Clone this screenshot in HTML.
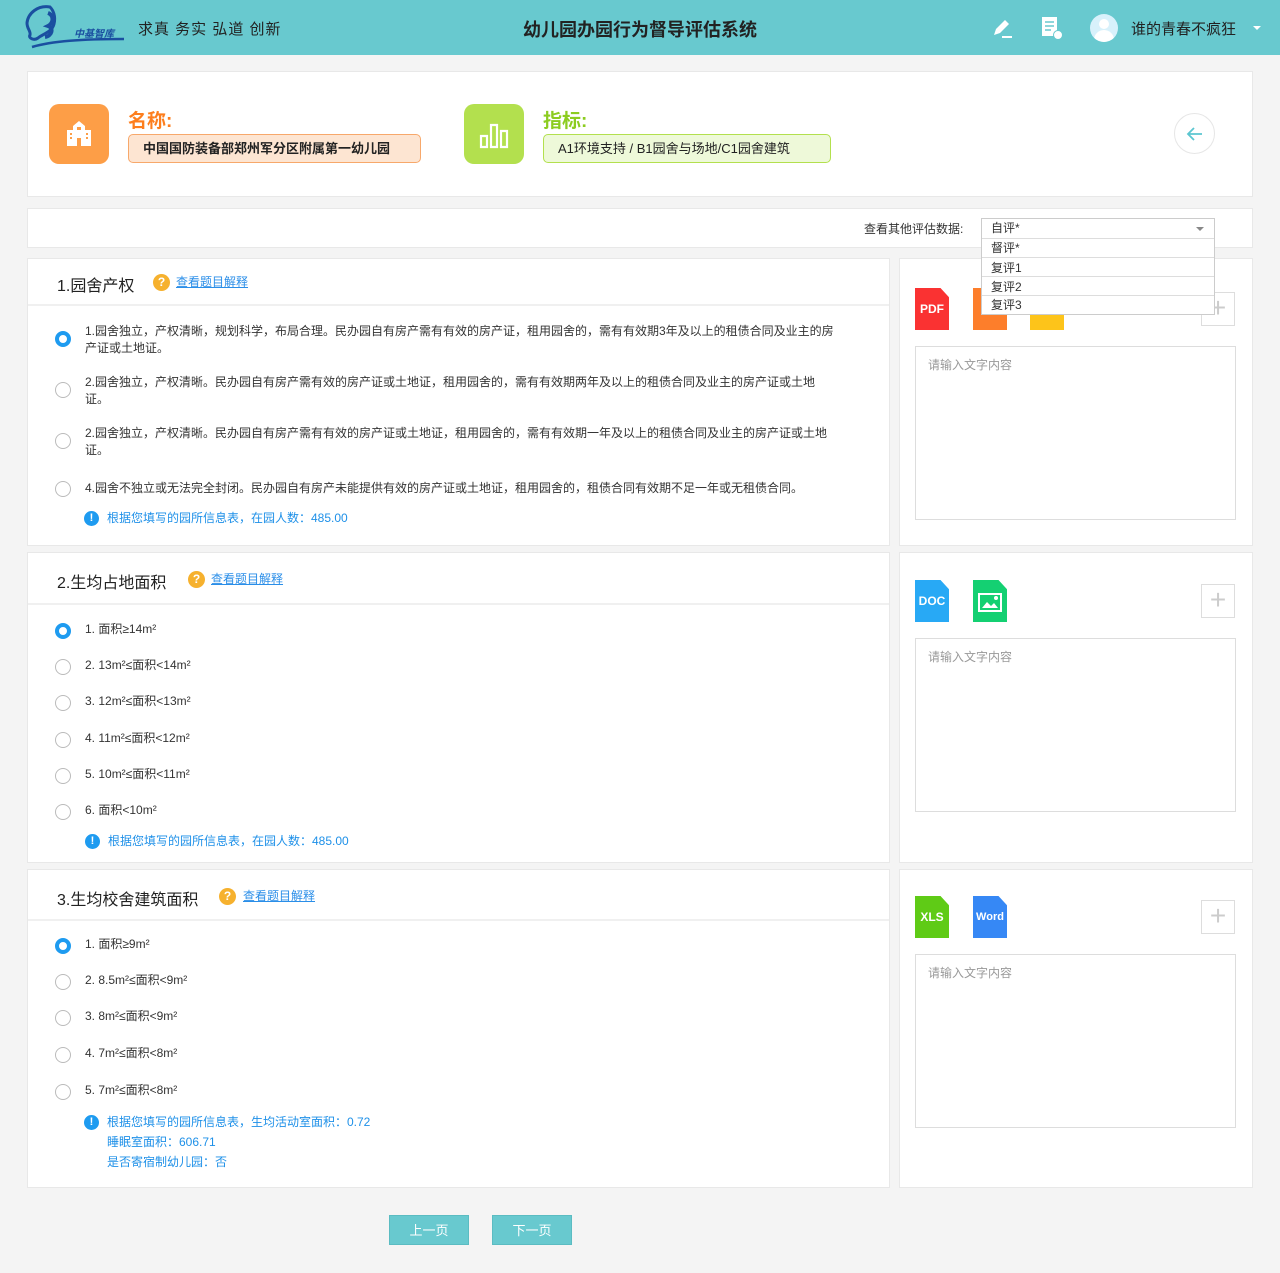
<!DOCTYPE html>
<html><head><meta charset="utf-8"><style>
*{margin:0;padding:0;box-sizing:border-box}
body{width:1280px;height:1273px;background:#f4f4f4;font-family:"Liberation Sans","Noto Sans CJK SC",sans-serif;position:relative;overflow:hidden;color:#333}
.a{position:absolute}
.card{position:absolute;background:#fff;border:1px solid #e8e8e8}
.radio{position:absolute;width:16px;height:16px;border:1px solid #bbb;border-radius:50%;background:#fff}
.radio.on{border:4px solid #1e9bf0}
.opt{position:absolute;font-size:12px;color:#333;line-height:17px}
.tip{position:absolute;font-size:12px;color:#1e90e8;line-height:20px}
.tipi{position:absolute;width:15px;height:15px;border-radius:50%;background:#1e9bf0;color:#fff;font-size:11px;font-weight:bold;text-align:center;line-height:15px}
.qt{position:absolute;font-size:16px;color:#222}
.help{position:absolute;width:17px;height:17px;border-radius:50%;background:#f6b12e;color:#fff;font-size:12px;font-weight:bold;text-align:center;line-height:17px}
.link{position:absolute;font-size:12px;color:#2a8ee8;text-decoration:underline}
.sep{position:absolute;height:2px;background:#f0f0f0}
.file{position:absolute;width:34px;height:42px;color:#fff;font-size:12px;font-weight:bold;text-align:center;line-height:42px;clip-path:polygon(0 0,75% 0,100% 22%,100% 100%,0 100%)}
.plus{position:absolute;width:34px;height:34px;border:1px solid #ddd;color:#ccc;font-size:28px;text-align:center;line-height:30px;font-weight:200}
.ta{position:absolute;border:1px solid #ddd;font-size:12px;color:#999;padding:9px 12px}
.btn{position:absolute;width:80px;height:30px;background:#68c9cf;color:#fff;font-size:13px;text-align:center;line-height:30px;border:1px solid #5bbcc2}
</style></head><body>
<div class="a" style="left:0;top:0;width:1280px;height:55px;background:#68c9cf"></div>
<svg class="a" style="left:22px;top:3px" width="106" height="52" viewBox="0 0 106 52"><path d="M28 4C16 2 6 10 5 20c0 6 4 8 3 12-2 3 4 6 8 3 5-4 14-6 16-14 2-8-1-14-4-17z" fill="none" stroke="#1a4fa0" stroke-width="3"/><path d="M26 10c6 2 6 10 0 13 6 2 4 10-3 11" fill="none" stroke="#1a4fa0" stroke-width="4"/><path d="M10 44c20-6 50-8 92-8" fill="none" stroke="#1a4fa0" stroke-width="2.5"/><text x="52" y="34" font-size="10" font-style="italic" font-weight="bold" fill="#1a4fa0" font-family="Liberation Sans,Noto Sans CJK SC,sans-serif">中基智库</text></svg>
<div class="a" style="left:138px;top:18px;font-size:15px;color:#222;letter-spacing:1px">求真 务实 弘道 创新</div>
<div class="a" style="left:0;width:1280px;top:16px;text-align:center;font-size:18px;color:#222;font-weight:bold">幼儿园办园行为督导评估系统</div>
<svg class="a" style="left:990px;top:16px" width="24" height="24" viewBox="0 0 24 24"><path d="M4 19l2-6 9-9 4 4-9 9z" fill="#fff"/><path d="M12 21h10" stroke="#fff" stroke-width="2"/></svg>
<svg class="a" style="left:1040px;top:15px" width="24" height="26" viewBox="0 0 24 26"><rect x="2" y="2" width="15" height="19" fill="#fff"/><path d="M5 7h9M5 11h9M5 15h6" stroke="#68c9cf" stroke-width="1.5"/><circle cx="18" cy="20" r="4.5" fill="#fff" stroke="#68c9cf" stroke-width="1"/></svg>
<div class="a" style="left:1090px;top:14px;width:28px;height:28px;border-radius:50%;background:#d8f1fb;overflow:hidden"><div class="a" style="left:9px;top:5px;width:10px;height:10px;border-radius:50%;background:#fff"></div><div class="a" style="left:4px;top:16px;width:20px;height:14px;border-radius:10px 10px 0 0;background:#fff"></div></div>
<div class="a" style="left:1131px;top:18px;font-size:15px;color:#222">谁的青春不疯狂</div>
<div class="a" style="left:1253px;top:26px;border:4px solid transparent;border-top:4px solid #fff"></div>

<div class="card" style="left:27px;top:71px;width:1226px;height:126px"></div>
<div class="a" style="left:49px;top:104px;width:60px;height:60px;border-radius:10px;background:#fd9e47"></div>
<svg class="a" style="left:63px;top:118px" width="32" height="32" viewBox="0 0 32 32"><path d="M10 8l6-5 6 5v4h6v16H4V12h6z" fill="#fff"/><rect x="14" y="20" width="4" height="8" fill="#fd9e47"/><rect x="14" y="9" width="4" height="3" fill="#fd9e47"/><path d="M7 16h2M7 20h2M23 16h2M23 20h2" stroke="#fd9e47" stroke-width="2"/></svg>
<div class="a" style="left:128px;top:106px;font-size:19px;color:#fd7e1d;font-weight:bold">名称:</div>
<div class="a" style="left:128px;top:134px;width:293px;height:29px;border:1px solid #f7a86b;border-radius:5px;background:#fde5d2;font-size:13px;color:#222;line-height:27px;padding-left:14px;font-weight:bold">中国国防装备部郑州军分区附属第一幼儿园</div>
<div class="a" style="left:464px;top:104px;width:60px;height:60px;border-radius:10px;background:#b3e04e"></div>
<svg class="a" style="left:478px;top:118px" width="32" height="32" viewBox="0 0 32 32"><path d="M3 18h6v11H3zM13 7h6v22h-6zM23 13h6v16h-6z" fill="none" stroke="#fff" stroke-width="2.2"/></svg>
<div class="a" style="left:543px;top:106px;font-size:19px;color:#8ccc20;font-weight:bold">指标:</div>
<div class="a" style="left:543px;top:134px;width:288px;height:29px;border:1px solid #b3e04e;border-radius:5px;background:#eef9d9;font-size:13px;color:#222;line-height:27px;padding-left:14px">A1环境支持 / B1园舍与场地/C1园舍建筑</div>
<div class="a" style="left:1174px;top:113px;width:41px;height:41px;border-radius:50%;border:1px solid #e6e6e6"></div>
<svg class="a" style="left:1185px;top:124px" width="20" height="20" viewBox="0 0 20 20"><path d="M17 10H3M9 4l-6 6 6 6" fill="none" stroke="#5cc6d0" stroke-width="1.8"/></svg>

<div class="card" style="left:27px;top:208px;width:1226px;height:40px"></div>
<div class="a" style="left:864px;top:220px;font-size:12px;color:#333">查看其他评估数据:</div>

<!-- Q1 -->
<div class="card" style="left:27px;top:258px;width:863px;height:288px"></div>
<div class="qt" style="left:57px;top:272px">1.园舍产权</div><div class="help" style="left:153px;top:274px">?</div><div class="link" style="left:176px;top:273px">查看题目解释</div>
<div class="sep" style="left:28px;top:304px;width:861px"></div>
<div class="radio on" style="left:55px;top:331px"></div><div class="opt" style="left:85px;top:323px;width:758px">1.园舍独立，产权清晰，规划科学，布局合理。民办园自有房产需有有效的房产证，租用园舍的，需有有效期3年及以上的租债合同及业主的房产证或土地证。</div>
<div class="radio" style="left:55px;top:382px"></div><div class="opt" style="left:85px;top:374px;width:752px">2.园舍独立，产权清晰。民办园自有房产需有效的房产证或土地证，租用园舍的，需有有效期两年及以上的租债合同及业主的房产证或土地证。</div>
<div class="radio" style="left:55px;top:433px"></div><div class="opt" style="left:85px;top:425px;width:752px">2.园舍独立，产权清晰。民办园自有房产需有有效的房产证或土地证，租用园舍的，需有有效期一年及以上的租债合同及业主的房产证或土地证。</div>
<div class="radio" style="left:55px;top:481px"></div><div class="opt" style="left:85px;top:480px;width:780px">4.园舍不独立或无法完全封闭。民办园自有房产未能提供有效的房产证或土地证，租用园舍的，租债合同有效期不足一年或无租债合同。</div>
<div class="tipi" style="left:84px;top:511px">!</div><div class="tip" style="left:107px;top:508px">根据您填写的园所信息表，在园人数：485.00</div>

<div class="card" style="left:899px;top:258px;width:354px;height:288px"></div>
<div class="file" style="left:915px;top:288px;background:#fa3232">PDF</div>
<div class="file" style="left:973px;top:288px;background:#fd7e2b"></div>
<div class="file" style="left:1030px;top:288px;background:#fdc41a"></div>
<div class="plus" style="left:1201px;top:292px">+</div>
<div class="ta" style="left:915px;top:346px;width:321px;height:174px">请输入文字内容</div>

<!-- dropdown -->
<div class="a" style="left:981px;top:218px;width:234px;height:97px;background:#fff;border:1px solid #ccc;font-size:12px;color:#333">
<div style="height:20px;line-height:19px;padding-left:9px;border-bottom:1px solid #ddd">自评*<span style="position:absolute;right:10px;top:8px;border:4px solid transparent;border-top:4px solid #888"></span></div>
<div style="height:19px;line-height:19px;padding-left:9px;border-bottom:1px solid #ddd">督评*</div>
<div style="height:19px;line-height:21px;padding-left:9px;border-bottom:1px solid #ddd">复评1</div>
<div style="height:19px;line-height:21px;padding-left:9px;border-bottom:1px solid #ddd">复评2</div>
<div style="height:18px;line-height:19px;padding-left:9px">复评3</div>
</div>

<!-- Q2 -->
<div class="card" style="left:27px;top:552px;width:863px;height:311px"></div>
<div class="qt" style="left:57px;top:569px">2.生均占地面积</div><div class="help" style="left:188px;top:571px">?</div><div class="link" style="left:211px;top:570px">查看题目解释</div>
<div class="sep" style="left:28px;top:603px;width:861px"></div>
<div class="radio on" style="left:55px;top:623px"></div><div class="opt" style="left:85px;top:621px">1. 面积≥14m²</div>
<div class="radio" style="left:55px;top:659px"></div><div class="opt" style="left:85px;top:657px">2. 13m²≤面积&lt;14m²</div>
<div class="radio" style="left:55px;top:695px"></div><div class="opt" style="left:85px;top:693px">3. 12m²≤面积&lt;13m²</div>
<div class="radio" style="left:55px;top:732px"></div><div class="opt" style="left:85px;top:730px">4. 11m²≤面积&lt;12m²</div>
<div class="radio" style="left:55px;top:768px"></div><div class="opt" style="left:85px;top:766px">5. 10m²≤面积&lt;11m²</div>
<div class="radio" style="left:55px;top:804px"></div><div class="opt" style="left:85px;top:802px">6. 面积&lt;10m²</div>
<div class="tipi" style="left:85px;top:834px">!</div><div class="tip" style="left:108px;top:831px">根据您填写的园所信息表，在园人数：485.00</div>

<div class="card" style="left:899px;top:552px;width:354px;height:311px"></div>
<div class="file" style="left:915px;top:580px;background:#28a9f5">DOC</div>
<div class="file" style="left:973px;top:580px;background:#14d072"><svg style="position:absolute;left:5px;top:13px" width="24" height="19" viewBox="0 0 24 19"><rect x="1" y="1" width="22" height="17" fill="none" stroke="#fff" stroke-width="2"/><path d="M4 15l5-6 4 4 3-3 4 5z" fill="#fff"/><circle cx="18" cy="5" r="2" fill="#fff"/></svg></div>
<div class="plus" style="left:1201px;top:584px">+</div>
<div class="ta" style="left:915px;top:638px;width:321px;height:174px">请输入文字内容</div>

<!-- Q3 -->
<div class="card" style="left:27px;top:869px;width:863px;height:319px"></div>
<div class="qt" style="left:57px;top:886px">3.生均校舍建筑面积</div><div class="help" style="left:219px;top:888px">?</div><div class="link" style="left:243px;top:887px">查看题目解释</div>
<div class="sep" style="left:28px;top:919px;width:861px"></div>
<div class="radio on" style="left:55px;top:938px"></div><div class="opt" style="left:85px;top:936px">1. 面积≥9m²</div>
<div class="radio" style="left:55px;top:974px"></div><div class="opt" style="left:85px;top:972px">2. 8.5m²≤面积&lt;9m²</div>
<div class="radio" style="left:55px;top:1010px"></div><div class="opt" style="left:85px;top:1008px">3. 8m²≤面积&lt;9m²</div>
<div class="radio" style="left:55px;top:1047px"></div><div class="opt" style="left:85px;top:1045px">4. 7m²≤面积&lt;8m²</div>
<div class="radio" style="left:55px;top:1084px"></div><div class="opt" style="left:85px;top:1082px">5. 7m²≤面积&lt;8m²</div>
<div class="tipi" style="left:84px;top:1115px">!</div><div class="tip" style="left:107px;top:1112px">根据您填写的园所信息表，生均活动室面积：0.72<br>睡眠室面积：606.71<br>是否寄宿制幼儿园：否</div>

<div class="card" style="left:899px;top:869px;width:354px;height:319px"></div>
<div class="file" style="left:915px;top:896px;background:#5fcb16">XLS</div>
<div class="file" style="left:973px;top:896px;background:#3688f5;font-size:11px">Word</div>
<div class="plus" style="left:1201px;top:900px">+</div>
<div class="ta" style="left:915px;top:954px;width:321px;height:174px">请输入文字内容</div>

<div class="btn" style="left:389px;top:1215px">上一页</div>
<div class="btn" style="left:492px;top:1215px">下一页</div>
</body></html>
